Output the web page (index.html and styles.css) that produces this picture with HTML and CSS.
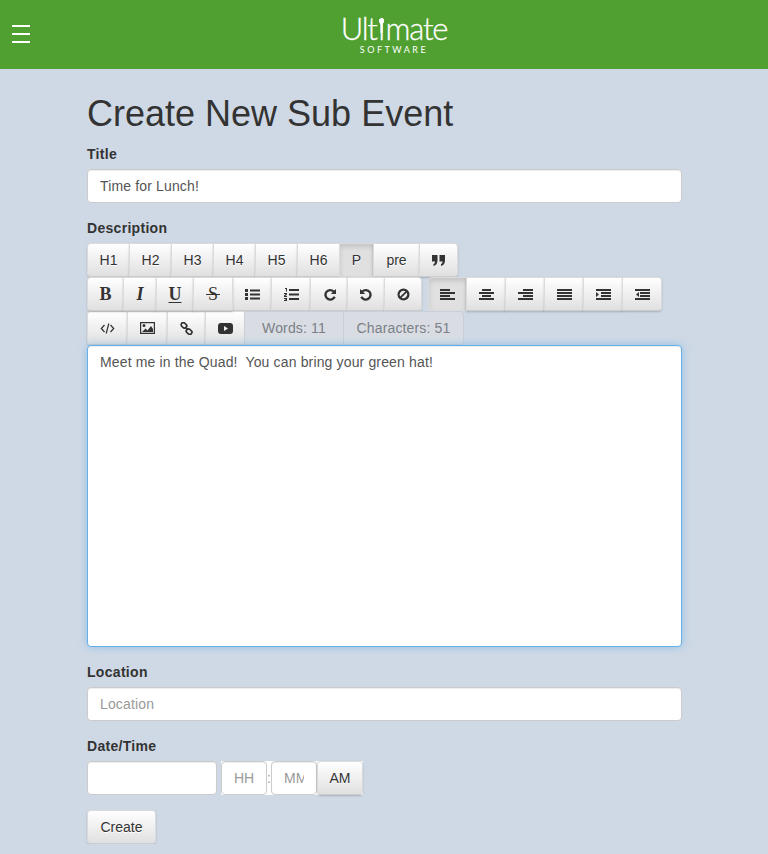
FILE: index.html
```html
<!DOCTYPE html>
<html>
<head>
<meta charset="utf-8"/>
<title>Create New Sub Event</title>
<link rel="stylesheet" href="styles.css">
</head>
<body>
<header class="topbar">
    <div class="burger"><span></span><span></span><span></span></div>
    <div class="logo">
        <div class="logo-main">Ult<span class="logo-i">i<svg class="logo-man" viewBox="0 0 5 14"><path d="M0 0h5v3L3.500 5.500V14h-2V5.500L0 3z"/></svg></span>mate</div>
        <div class="logo-sub">SOFTWARE</div>
    </div>
</header>
<main class="page">
    <h1>Create New Sub Event</h1>
    <div class="form-group">
        <label>Title</label>
        <input class="form-control" type="text" value="Time for Lunch!">
    </div>
    <div class="form-group">
        <label>Description</label>
        <div class="toolbar">
            <div class="btn-group">
                <a class="btn w43">H1</a><a class="btn w43">H2</a><a class="btn w43">H3</a><a class="btn w43">H4</a><a class="btn w43">H5</a><a class="btn w43">H6</a><a class="btn w35 active">P</a><a class="btn w47">pre</a>
                <a class="btn w39"><svg class="ico" viewBox="0 0 15 11"><path d="M1 0h5.500v5.500C6.500 8.500 5 10.500 2.500 11V9C3.500 8.700 4 7.800 4 6.500H1zM8.500 0H14v5.500c0 3-1.500 5-4 5.500V9c1-.3 1.500-1.200 1.500-2.500h-3z"/></svg></a>
            </div>
            <div class="btn-row">
                <div class="btn-group">
                    <a class="btn w37 fmt bold">B</a><a class="btn w34 fmt ital">I</a><a class="btn w38 fmt under">U</a><a class="btn w40 fmt strike">S</a>
                    <a class="btn w40"><svg class="ico" viewBox="0 0 15 11"><path d="M0 0h3v3H0zM0 4h3v3H0zM0 8h3v3H0zM5 .5h10v2H5zM5 4.500h10v2H5zM5 8.500h10v2H5z"/></svg></a>
                    <a class="btn w40"><svg class="ico tall" viewBox="0 0 15 13"><path d="M1 0h2v3.500H2V1H1zM0 5h3v1.500L1.300 8H3v1H0V7.500L1.700 6H0zM0 10h3v3H0v-1h2v-.2H1v-.6h1V11H0zM5 1h10v2H5zM5 5.500h10v2H5zM5 10h10v2H5z"/></svg></a>
                    <a class="btn w38"><svg class="ico sq" viewBox="0 0 14 13"><path d="M14 .5v5.500H8.500l2-2.100a3.900 3.900 0 1 0 .9 4.500l2.300 1A6.400 6.400 0 1 1 12.200 2.200z"/></svg></a>
                    <a class="btn w38"><svg class="ico sq flip" viewBox="0 0 14 13"><path d="M14 .5v5.500H8.500l2-2.100a3.900 3.900 0 1 0 .9 4.500l2.300 1A6.400 6.400 0 1 1 12.200 2.200z"/></svg></a>
                    <a class="btn w38"><svg class="ico sq" viewBox="0 0 14 14"><path fill-rule="evenodd" d="M7 .5a6.500 6.500 0 1 0 0 13 6.500 6.500 0 0 0 0-13zM2.800 7a4.200 4.200 0 0 1 6.400-3.500L3.500 9.200A4.200 4.200 0 0 1 2.800 7zm2 3.500l5.700-5.700A4.200 4.200 0 0 1 4.800 10.500z"/></svg></a>
                </div>
                <div class="btn-group">
                    <a class="btn w39 active"><svg class="ico" viewBox="0 0 15 11"><path d="M0 0h10v2H0zM0 3h15v2H0zM0 6h10v2H0zM0 9h15v2H0z"/></svg></a>
                    <a class="btn w40"><svg class="ico" viewBox="0 0 15 11"><path d="M3 0h9v2H3zM0 3h15v2H0zM3 6h9v2H3zM0 9h15v2H0z"/></svg></a>
                    <a class="btn w40"><svg class="ico" viewBox="0 0 15 11"><path d="M5 0h10v2H5zM0 3h15v2H0zM5 6h10v2H5zM0 9h15v2H0z"/></svg></a>
                    <a class="btn w40"><svg class="ico" viewBox="0 0 15 11"><path d="M0 0h15v2H0zM0 3h15v2H0zM0 6h15v2H0zM0 9h15v2H0z"/></svg></a>
                    <a class="btn w40"><svg class="ico" viewBox="0 0 15 11"><path d="M0 0h15v2H0zM5 3h10v2H5zM5 6h10v2H5zM0 9h15v2H0zM0 3l3 2.500L0 8z"/></svg></a>
                    <a class="btn w40"><svg class="ico" viewBox="0 0 15 11"><path d="M0 0h15v2H0zM5 3h10v2H5zM5 6h10v2H5zM0 9h15v2H0zM4 3L1 5.500 4 8z"/></svg></a>
                </div>
            </div>
            <div class="btn-group">
                <a class="btn w41"><svg class="ico" viewBox="0 0 14 11"><path fill="none" stroke="#333" stroke-width="1.200" d="M4 2L.8 5.500 4 9M10 2l3.200 3.500L10 9M8.300 .5l-2.600 10"/></svg></a>
                <a class="btn w41"><svg class="ico tall12" viewBox="0 0 15 12"><path fill-rule="evenodd" d="M0 0h15v12H0zM1.200 1.200v9.600h12.600V1.200zM2 10l3.500-3.500 2 2L11 4l2 3v3zM2.500 3.500a1.500 1.500 0 1 1 3 0 1.500 1.500 0 0 1-3 0z"/></svg></a>
                <a class="btn w39"><svg class="ico sq" viewBox="0 0 13 13"><g fill="none" stroke="#333" stroke-width="1.700"><rect x=".9" y="1.200" width="6" height="4.300" rx="2.100" transform="rotate(40 3.900 3.400)"/><rect x="6.100" y="7.500" width="6" height="4.300" rx="2.100" transform="rotate(40 9.100 9.600)"/><path d="M5.200 5l2.600 3"/></g></svg></a>
                <a class="btn w40"><svg class="ico" viewBox="0 0 15 11"><path fill-rule="evenodd" d="M3 0h9a3 3 0 0 1 3 3v5a3 3 0 0 1-3 3H3a3 3 0 0 1-3-3V3a3 3 0 0 1 3-3zM6 3v5l4-2.500z"/></svg></a>
                <a class="btn stat w100">Words: 11</a><a class="btn stat w121">Characters: 51</a>
            </div>
        </div>
        <textarea class="form-control editor">Meet me in the Quad!  You can bring your green hat!</textarea>
    </div>
    <div class="form-group">
        <label>Location</label>
        <input class="form-control" type="text" placeholder="Location">
    </div>
    <div class="form-group">
        <label>Date/Time</label>
        <div class="datetime">
            <input class="form-control date" type="text">
            <div class="time">
                <input class="form-control part" type="text" placeholder="HH">
                <span class="colon">:</span>
                <input class="form-control part" type="text" placeholder="MM">
                <a class="btn ampm">AM</a>
            </div>
        </div>
    </div>
    <a class="btn create">Create</a>
</main>
</body>
</html>
```

FILE: styles.css
```css
* { box-sizing: border-box; }
body { margin: 0; background: #cfd9e5; color: #333; font-family: "Liberation Sans", Arial, sans-serif; font-size: 14px; line-height: 20px; }

.topbar { height: 69px; background: #4f9f31; display: flex; align-items: center; justify-content: center; position: relative; }
.burger { position: absolute; left: 12px; top: 25px; width: 18px; display: flex; flex-direction: column; gap: 6px; }
.burger span { display: block; height: 2px; background: #fff; }
.logo { color: #fff; text-align: center; margin: -1px 0 0 20px; }
.logo-main { font-family: Lato, sans-serif; font-weight: 300; font-size: 31px; line-height: 27px; letter-spacing: -1.200px; -webkit-text-stroke: .3px #fff; }
.logo-i { position: relative; padding: 0 1.500px; }
.logo-man { position: absolute; left: 50%; top: 10px; width: 5px; height: 14px; margin-left: -2.500px; fill: #fff; }
.logo-sub { font-family: Lato, sans-serif; font-size: 9px; line-height: 9px; letter-spacing: 2.500px; margin-top: 3px; }

.page { padding: 0 86px 0 87px; }
h1 { font-size: 36px; font-weight: 400; line-height: 40px; margin: 25px 0 10px; }
label { display: block; font-weight: 700; letter-spacing: .3px; margin-bottom: 5px; }
.form-group { margin-bottom: 15px; }

.form-control { display: block; width: 100%; height: 34px; padding: 6px 12px; font: inherit; letter-spacing: .15px; color: #555; background: #fff; border: 1px solid #ccc; border-radius: 4px; box-shadow: inset 0 1px 1px rgba(0,0,0,.075); outline: 0; }
.form-control::placeholder { color: #999; }
.editor { height: 302px; resize: none; border-color: #66afe9; box-shadow: inset 0 1px 1px rgba(0,0,0,.075), 0 0 8px rgba(102,175,233,.6); position: relative; }

.btn { display: flex; align-items: center; justify-content: center; height: 34px; padding: 0; color: #333; background: linear-gradient(#fff, #e0e0e0); border: 1px solid #ccc; border-color: #dbdbdb #dbdbdb #ccc; border-radius: 4px; text-shadow: 0 1px 0 #fff; box-shadow: 0 1px 2px rgba(0,0,0,.2); white-space: nowrap; }
.btn.active { background: #e0e0e0; border-color: #dbdbdb; box-shadow: inset 0 3px 5px rgba(0,0,0,.125); }
.btn.stat { background: #d9dde3; border-color: #c9cfd6; color: #7b8087; box-shadow: none; text-shadow: none; letter-spacing: .15px; }
.create { width: 69px; }

.btn-group { display: flex; }
.btn-group .btn { border-radius: 0; margin-left: -1px; }
.btn-group .btn:first-child { margin-left: 0; border-radius: 4px 0 0 4px; }
.btn-group .btn:last-child { border-radius: 0 4px 4px 0; }
.btn-row { display: flex; gap: 6px; }

.w34 { width: 34px; } .w35 { width: 35px; } .w37 { width: 37px; } .w38 { width: 38px; } .w39 { width: 39px; }
.w40 { width: 40px; } .w41 { width: 41px; } .w43 { width: 43px; } .w47 { width: 47px; } .w100 { width: 100px; } .w121 { width: 121px; }

.ico { width: 15px; height: 11px; fill: #333; }
.ico.tall { height: 13px; }
.ico.tall12 { height: 12px; }
.ico.sq { width: 13px; height: 13px; }
.flip { transform: scaleX(-1); }
.fmt { font-family: "Liberation Serif", serif; font-size: 18px; text-shadow: none; position: relative; }
.bold { font-weight: 700; }
.ital { font-style: italic; font-weight: 700; }
.under { font-weight: 700; text-decoration: underline; text-underline-offset: 2px; }
.strike::after { content: ""; position: absolute; left: 12px; right: 12px; top: 16px; height: 1px; background: #333; }

.datetime { display: flex; gap: 4px; }
.date { width: 130px; }
.time { display: flex; align-items: stretch; background: #fff; }
.part { width: 46px; letter-spacing: 0; }
.colon { width: 4px; text-align: center; line-height: 34px; color: #999; }
.ampm { width: 46px; }
```
